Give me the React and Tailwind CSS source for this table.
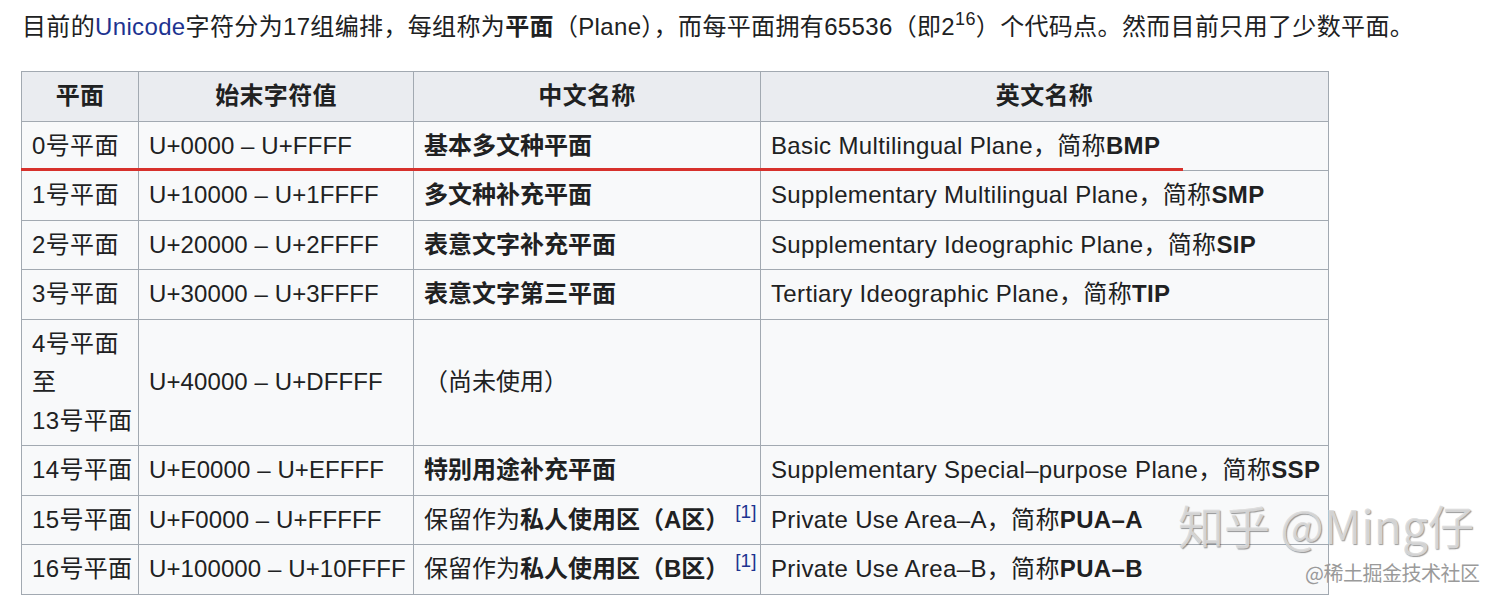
import React from 'react';

const rows = [
  { plane: ['0号平面'], range: 'U+0000 – U+FFFF', zh: [{ t: '基本多文种平面', b: true }], en: 'Basic Multilingual Plane', abbr: 'BMP' },
  { plane: ['1号平面'], range: 'U+10000 – U+1FFFF', zh: [{ t: '多文种补充平面', b: true }], en: 'Supplementary Multilingual Plane', abbr: 'SMP' },
  { plane: ['2号平面'], range: 'U+20000 – U+2FFFF', zh: [{ t: '表意文字补充平面', b: true }], en: 'Supplementary Ideographic Plane', abbr: 'SIP' },
  { plane: ['3号平面'], range: 'U+30000 – U+3FFFF', zh: [{ t: '表意文字第三平面', b: true }], en: 'Tertiary Ideographic Plane', abbr: 'TIP' },
  { plane: ['4号平面', '至', '13号平面'], range: 'U+40000 – U+DFFFF', zh: [{ t: '（尚未使用）', b: false }], en: null },
  { plane: ['14号平面'], range: 'U+E0000 – U+EFFFF', zh: [{ t: '特别用途补充平面', b: true }], en: 'Supplementary Special–purpose Plane', abbr: 'SSP' },
  { plane: ['15号平面'], range: 'U+F0000 – U+FFFFF', zh: [{ t: '保留作为', b: false }, { t: '私人使用区（A区）', b: true }], ref: true, en: 'Private Use Area–A', abbr: 'PUA–A' },
  { plane: ['16号平面'], range: 'U+100000 – U+10FFFF', zh: [{ t: '保留作为', b: false }, { t: '私人使用区（B区）', b: true }], ref: true, en: 'Private Use Area–B', abbr: 'PUA–B' },
];

const cell = 'border border-[#a2a9b1] px-[10px] py-[5px] leading-[38.5px] align-middle whitespace-nowrap';

export default function App() {
  return (
    <div className="relative w-[1512px] h-[602px] overflow-hidden bg-white text-[#202122] tracking-[0.35px] font-['Liberation_Sans','Noto_Sans_CJK_SC',sans-serif] text-[24px]">
      {/* Intro paragraph */}
      <p className="pl-[22px] pt-[8px] leading-[38.4px] whitespace-nowrap">
        目前的<span className="text-[#1d3390]">Unicode</span>字符分为17组编排，每组称为<b>平面</b>（Plane），而每平面拥有65536（即2
        <span className="inline-block align-top text-[18px] leading-[18px] mt-[2px]">16</span>）个代码点。然而目前只用了少数平面。
      </p>

      {/* Planes table */}
      <table className="ml-[21px] mt-[25px] w-[1308px] table-fixed border-collapse border border-[#a2a9b1] bg-[#f8f9fa]">
        <colgroup>
          <col className="w-[117px]" />
          <col className="w-[275px]" />
          <col className="w-[347px]" />
          <col />
        </colgroup>
        <thead>
          <tr className="bg-[#eaecf0]">
            <th className={`${cell} text-center font-bold`}>平面</th>
            <th className={`${cell} text-center font-bold`}>始末字符值</th>
            <th className={`${cell} text-center font-bold`}>中文名称</th>
            <th className={`${cell} text-center font-bold`}>英文名称</th>
          </tr>
        </thead>
        <tbody>
          {rows.map((r, i) => (
            <tr key={i}>
              <td className={cell}>
                {r.plane.map((p, j) => (
                  <div key={j}>{p}</div>
                ))}
              </td>
              <td className={`${cell} tracking-[0.1px]`}>{r.range}</td>
              <td className={`${cell} tracking-normal`}>
                {r.zh.map((z, j) => (
                  <span key={j} className={z.b ? 'font-bold' : ''}>{z.t}</span>
                ))}
                {r.ref && (
                  <span className="inline-block align-top ml-[6px] mt-[1px] text-[19px] leading-[20px] text-[#1d3390]">[1]</span>
                )}
              </td>
              <td className={cell}>
                {r.en && (
                  <>
                    {r.en}，简称<b>{r.abbr}</b>
                  </>
                )}
              </td>
            </tr>
          ))}
        </tbody>
      </table>

      {/* Red annotation underline */}
      <div className="absolute left-[21px] top-[168px] w-[1162px] h-[3px] bg-[#d7312c]" />

      {/* Watermarks */}
      <div className="absolute left-[1178px] top-[494px] text-[46px] leading-[60px] tracking-normal text-[#dcdcdc]/90 whitespace-nowrap font-['Noto_Sans_CJK_SC','Liberation_Sans',sans-serif] [text-shadow:1px_1px_1px_rgba(0,0,0,0.4)]">
        知乎 @Ming仔
      </div>
      <div className="absolute left-[1305px] top-[560px] text-[20px] leading-[26px] tracking-[-0.5px] text-[#9a9a9a] whitespace-nowrap font-['Noto_Sans_CJK_SC',sans-serif]">
        @稀土掘金技术社区
      </div>
    </div>
  );
}
